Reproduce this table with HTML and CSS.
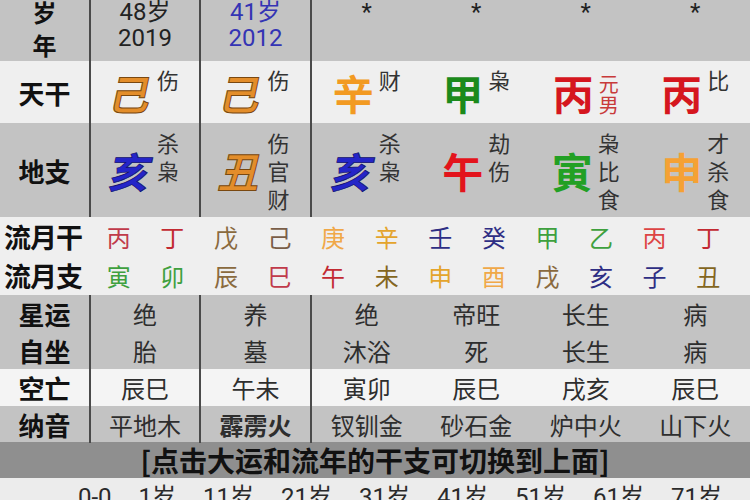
FILE: index.html
```html
<!DOCTYPE html>
<html lang="zh">
<head>
<meta charset="utf-8">
<link rel="stylesheet" href="styles.css">
</head>
<body>
<div class="table">
  <div class="row year gray">
    <div class="lab dv lab-year">岁<br>年</div>
    <div class="cell dv two">48岁<br>2019</div>
    <div class="cell dv two blue">41岁<br>2012</div>
    <div class="cell two">*<br>&nbsp;</div>
    <div class="cell two">*<br>&nbsp;</div>
    <div class="cell two">*<br>&nbsp;</div>
    <div class="cell two">*<br>&nbsp;</div>
  </div>

  <div class="row gan light">
    <div class="lab dv">天干</div>
    <div class="cell dv st"><span class="big tu skew">己</span><span class="ann">伤</span></div>
    <div class="cell dv st"><span class="big tu skew">己</span><span class="ann">伤</span></div>
    <div class="cell st"><span class="big jin">辛</span><span class="ann">财</span></div>
    <div class="cell st"><span class="big mu">甲</span><span class="ann">枭</span></div>
    <div class="cell st"><span class="big huo">丙</span><span class="ann ann-red">元<br>男</span></div>
    <div class="cell st"><span class="big huo">丙</span><span class="ann">比</span></div>
  </div>

  <div class="row zhi gray">
    <div class="lab dv">地支</div>
    <div class="cell dv st"><span class="big shui skew">亥</span><span class="ann">杀<br>枭</span></div>
    <div class="cell dv st"><span class="big tu skew">丑</span><span class="ann">伤<br>官<br>财</span></div>
    <div class="cell st"><span class="big shui skew">亥</span><span class="ann">杀<br>枭</span></div>
    <div class="cell st"><span class="big huo2">午</span><span class="ann">劫<br>伤</span></div>
    <div class="cell st"><span class="big mu2">寅</span><span class="ann">枭<br>比<br>食</span></div>
    <div class="cell st"><span class="big jin2">申</span><span class="ann">才<br>杀<br>食</span></div>
  </div>

  <div class="lrow light">
    <div class="llab">流月干</div>
    <div class="m c-red">丙</div><div class="m c-red2">丁</div>
    <div class="m c-brown">戊</div><div class="m c-brown2">己</div>
    <div class="m c-orange">庚</div><div class="m c-gold">辛</div>
    <div class="m c-navy">壬</div><div class="m c-navy">癸</div>
    <div class="m c-green">甲</div><div class="m c-green">乙</div>
    <div class="m c-red3">丙</div><div class="m c-red2">丁</div>
  </div>
  <div class="lrow light">
    <div class="llab">流月支</div>
    <div class="m c-green">寅</div><div class="m c-green">卯</div>
    <div class="m c-brown">辰</div><div class="m c-red">巳</div>
    <div class="m c-red2">午</div><div class="m c-olive">未</div>
    <div class="m c-gold">申</div><div class="m c-orange">酉</div>
    <div class="m c-brown">戌</div><div class="m c-navy">亥</div>
    <div class="m c-navy">子</div><div class="m c-olive">丑</div>
  </div>

  <div class="row small gray">
    <div class="lab dv">星运</div>
    <div class="cell dv">绝</div>
    <div class="cell dv">养</div>
    <div class="cell">绝</div>
    <div class="cell">帝旺</div>
    <div class="cell">长生</div>
    <div class="cell">病</div>
  </div>
  <div class="row small gray">
    <div class="lab dv">自坐</div>
    <div class="cell dv">胎</div>
    <div class="cell dv">墓</div>
    <div class="cell">沐浴</div>
    <div class="cell">死</div>
    <div class="cell">长生</div>
    <div class="cell">病</div>
  </div>
  <div class="row small white">
    <div class="lab dv">空亡</div>
    <div class="cell dv">辰巳</div>
    <div class="cell dv">午未</div>
    <div class="cell">寅卯</div>
    <div class="cell">辰巳</div>
    <div class="cell">戌亥</div>
    <div class="cell">辰巳</div>
  </div>
  <div class="row small nayin gray">
    <div class="lab dv">纳音</div>
    <div class="cell dv">平地木</div>
    <div class="cell dv dark">霹雳火</div>
    <div class="cell">钗钏金</div>
    <div class="cell">砂石金</div>
    <div class="cell">炉中火</div>
    <div class="cell">山下火</div>
  </div>

  <div class="bar">[点击大运和流年的干支可切换到上面]</div>

  <div class="ages">
    <span>0-0</span><span>1岁</span><span>11岁</span><span>21岁</span><span>31岁</span><span>41岁</span><span>51岁</span><span>61岁</span><span>71岁</span>
  </div>
</div>
</body>
</html>
```

FILE: styles.css
```css
html, body {
  margin: 0;
  padding: 0;
  width: 750px;
  height: 500px;
  overflow: hidden;
  background: #ececec;
}

.table {
  width: 750px;
  font-family: Roboto, "Noto Sans CJK SC", sans-serif;
  color: #2a2a2a;
}

.gray { background: #c3c3c3; }
.light { background: #efefef; }
.white { background: #f4f4f4; }

.row {
  display: grid;
  grid-template-columns: 91px 110px 111px repeat(4, 1fr);
}

.dv { border-right: 2px solid #4a4a4a; }

.lab {
  font-family: "Noto Sans CJK SC", sans-serif;
  font-weight: 700;
  font-size: 26px;
  color: #111;
  display: flex;
  align-items: center;
  justify-content: center;
  white-space: nowrap;
}

.cell {
  display: flex;
  align-items: center;
  justify-content: center;
  text-align: center;
}

/* year row */
.year { height: 61px; grid-template-rows: 61px; }
.lab-year {
  flex-direction: column;
  justify-content: flex-start;
  font-size: 24px;
  line-height: 33px;
  text-align: center;
  margin-top: -5px;
}
.two {
  flex-direction: column;
  justify-content: flex-start;
  font-size: 24px;
  line-height: 26px;
  color: #222;
  margin-top: -1px;
}
.blue { color: #3434b4; }

/* stems */
.gan { height: 62px; }
.zhi { height: 94px; }

.big {
  font-family: "Noto Sans CJK SC", sans-serif;
  font-weight: 700;
  font-size: 41px;
  line-height: 41px;
  display: inline-block;
}
.skew { transform: skewX(-12deg); }

.tu { color: #e38d2a; -webkit-text-stroke: 1px #7a4810; }
.shui { color: #2525c8; -webkit-text-stroke: 0.8px #121270; }
.jin { color: #f29a22; }
.jin2 { color: #f5a134; }
.mu { color: #1b8a1b; }
.mu2 { color: #22a024; }
.huo { color: #d5161e; }
.huo2 { color: #e3141c; }

.ann {
  align-self: flex-start;
  font-family: "Noto Sans CJK SC", sans-serif;
  font-size: 22px;
  color: #333;
  margin-left: 5px;
}
.gan .ann { line-height: 24px; padding-top: 6px; }
.gan .ann-red { color: #c83a3a; font-size: 20px; line-height: 21px; padding-top: 12px; }
.zhi .ann { line-height: 28px; padding-top: 5px; }

/* liu yue rows */
.lrow {
  display: grid;
  grid-template-columns: 92px repeat(12, 53.58px);
  height: 39px;
  align-items: center;
}
.llab {
  font-family: "Noto Sans CJK SC", sans-serif;
  font-weight: 700;
  font-size: 27px;
  color: #111;
  text-align: center;
  padding-right: 6px;
  white-space: nowrap;
  letter-spacing: -1px;
}
.m {
  font-family: "Noto Sans CJK SC", sans-serif;
  font-size: 24px;
  text-align: center;
  font-weight: 400;
}
.c-red { color: #c03a4a; }
.c-red2 { color: #c22a32; }
.c-red3 { color: #dd4444; }
.c-brown { color: #8a6a3e; }
.c-brown2 { color: #7a5e48; }
.c-orange { color: #f0a848; }
.c-gold { color: #e4a42c; }
.c-navy { color: #2e2e84; }
.c-green { color: #3ea03e; }
.c-olive { color: #84661e; }

/* small rows */
.small { height: 37px; }
.small .cell {
  font-family: "Noto Sans CJK SC", sans-serif;
  font-size: 24px;
  color: #2e2e2e;
}
.nayin { height: 36px; }
.dark { color: #1e1e1e; font-weight: 700; }

.bar {
  height: 36px;
  background: #8f8f8f;
  font-family: "Noto Sans CJK SC", sans-serif;
  font-weight: 700;
  font-size: 28px;
  line-height: 36px;
  color: #111;
  text-align: center;
  white-space: nowrap;
}

.ages {
  background: #ececec;
  display: flex;
  gap: 27px;
  padding: 5px 0 0 78px;
  font-size: 24px;
  line-height: 28px;
  color: #2a2a2a;
  white-space: nowrap;
}
```
